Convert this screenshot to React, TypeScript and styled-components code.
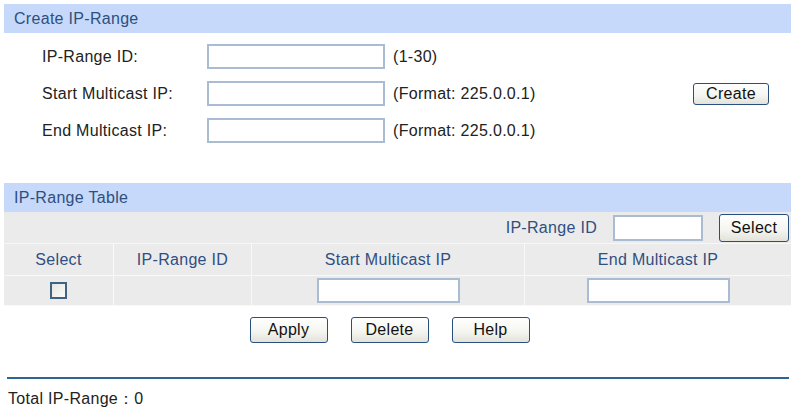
import React from "react";
import styled, { createGlobalStyle } from "styled-components";

const Global = createGlobalStyle`
  html, body { margin: 0; padding: 0; background: #fff; }
  body { font-family: "Liberation Sans", Arial, sans-serif; font-size: 16px; letter-spacing: 0.3px; color: #222; }
`;

const Page = styled.div`
  width: 795px;
  padding: 4px 4px 0 4px;
  box-sizing: border-box;
`;

const SectionHeader = styled.div<{ $top?: number }>`
  height: 29px;
  margin-top: ${(p) => p.$top ?? 0}px;
  background: #c6d9fb;
  color: #2f4f7d;
  display: flex;
  align-items: center;
  padding-left: 10px;
  font-size: 16px;
`;

const Form = styled.div`
  display: flex;
  flex-direction: column;
  padding-top: 11px;
  gap: 12px;
`;

const FormRow = styled.div`
  display: grid;
  grid-template-columns: 165px 186px 300px 76px;
  padding-left: 38px;
  align-items: center;
  height: 25px;
`;

const Label = styled.span`
  color: #222;
`;

const Hint = styled.span`
  color: #222;
`;

const TextInput = styled.input<{ $w: number; $h?: number }>`
  width: ${(p) => p.$w}px;
  height: ${(p) => p.$h ?? 25}px;
  box-sizing: border-box;
  border: 2px solid #a9bcd2;
  background: #fff;
  padding: 0 3px;
  margin: 0;
  font: inherit;
  outline: none;
`;

const Button = styled.button<{ $w: number; $h: number }>`
  width: ${(p) => p.$w}px;
  height: ${(p) => p.$h}px;
  box-sizing: border-box;
  border: 1px solid #274f7f;
  border-radius: 3px;
  background: linear-gradient(#ffffff, #f4f4ef 60%, #e2e2da);
  font-family: "Liberation Sans", Arial, sans-serif;
  font-size: 16px;
  letter-spacing: 0.3px;
  color: #111;
  padding: 0;
  margin: 0;
`;

const Table = styled.div`
  background: #ebebeb;
`;

const SearchRow = styled.div`
  height: 32px;
  display: flex;
  align-items: center;
  justify-content: flex-end;
  gap: 16px;
  padding-right: 2px;
  border-bottom: 1px solid #f7f7f7;
  box-sizing: border-box;
`;

const SearchLabel = styled.span`
  color: #2f4f82;
`;

const Grid = styled.div`
  display: grid;
  grid-template-columns: 110px 138px 273px 1fr;
`;

const Cell = styled.div<{ $h: number; $last?: boolean }>`
  height: ${(p) => p.$h}px;
  display: flex;
  align-items: center;
  justify-content: center;
  color: #2f4f82;
  border-right: ${(p) => (p.$last ? "none" : "1px solid #f9f9f9")};
  border-bottom: 1px solid #f9f9f9;
  box-sizing: border-box;
`;

const Check = styled.input`
  appearance: none;
  width: 17px;
  height: 17px;
  box-sizing: border-box;
  margin: 0;
  border: 2px solid #3f6387;
  background: linear-gradient(135deg, #e6e6e0, #fbfbf8);
`;

const Actions = styled.div`
  display: flex;
  justify-content: center;
  gap: 23px;
  padding: 11px 16px 0 0;
`;

const Divider = styled.div`
  margin: 34px 2px 0 3px;
  height: 2px;
  background: #2c6596;
`;

const Total = styled.div`
  padding: 10px 0 0 4px;
  color: #222;
`;

export default function App() {
  return (
    <Page>
      <Global />
      <SectionHeader>Create IP-Range</SectionHeader>
      <Form>
        <FormRow>
          <Label>IP-Range ID:</Label>
          <TextInput $w={178} />
          <Hint>(1-30)</Hint>
          <span />
        </FormRow>
        <FormRow>
          <Label>Start Multicast IP:</Label>
          <TextInput $w={178} />
          <Hint>(Format: 225.0.0.1)</Hint>
          <Button $w={76} $h={22}>Create</Button>
        </FormRow>
        <FormRow>
          <Label>End Multicast IP:</Label>
          <TextInput $w={178} />
          <Hint>(Format: 225.0.0.1)</Hint>
          <span />
        </FormRow>
      </Form>
      <SectionHeader $top={40}>IP-Range Table</SectionHeader>
      <Table>
        <SearchRow>
          <SearchLabel>IP-Range ID</SearchLabel>
          <TextInput $w={90} $h={26} />
          <Button $w={70} $h={28}>Select</Button>
        </SearchRow>
        <Grid>
          <Cell $h={32}>Select</Cell>
          <Cell $h={32}>IP-Range ID</Cell>
          <Cell $h={32}>Start Multicast IP</Cell>
          <Cell $h={32} $last>End Multicast IP</Cell>
          <Cell $h={30}><Check type="checkbox" /></Cell>
          <Cell $h={30} />
          <Cell $h={30}><TextInput $w={143} /></Cell>
          <Cell $h={30} $last><TextInput $w={143} /></Cell>
        </Grid>
      </Table>
      <Actions>
        <Button $w={78} $h={26}>Apply</Button>
        <Button $w={78} $h={26}>Delete</Button>
        <Button $w={78} $h={26}>Help</Button>
      </Actions>
      <Divider />
      <Total>Total IP-Range：0</Total>
    </Page>
  );
}
